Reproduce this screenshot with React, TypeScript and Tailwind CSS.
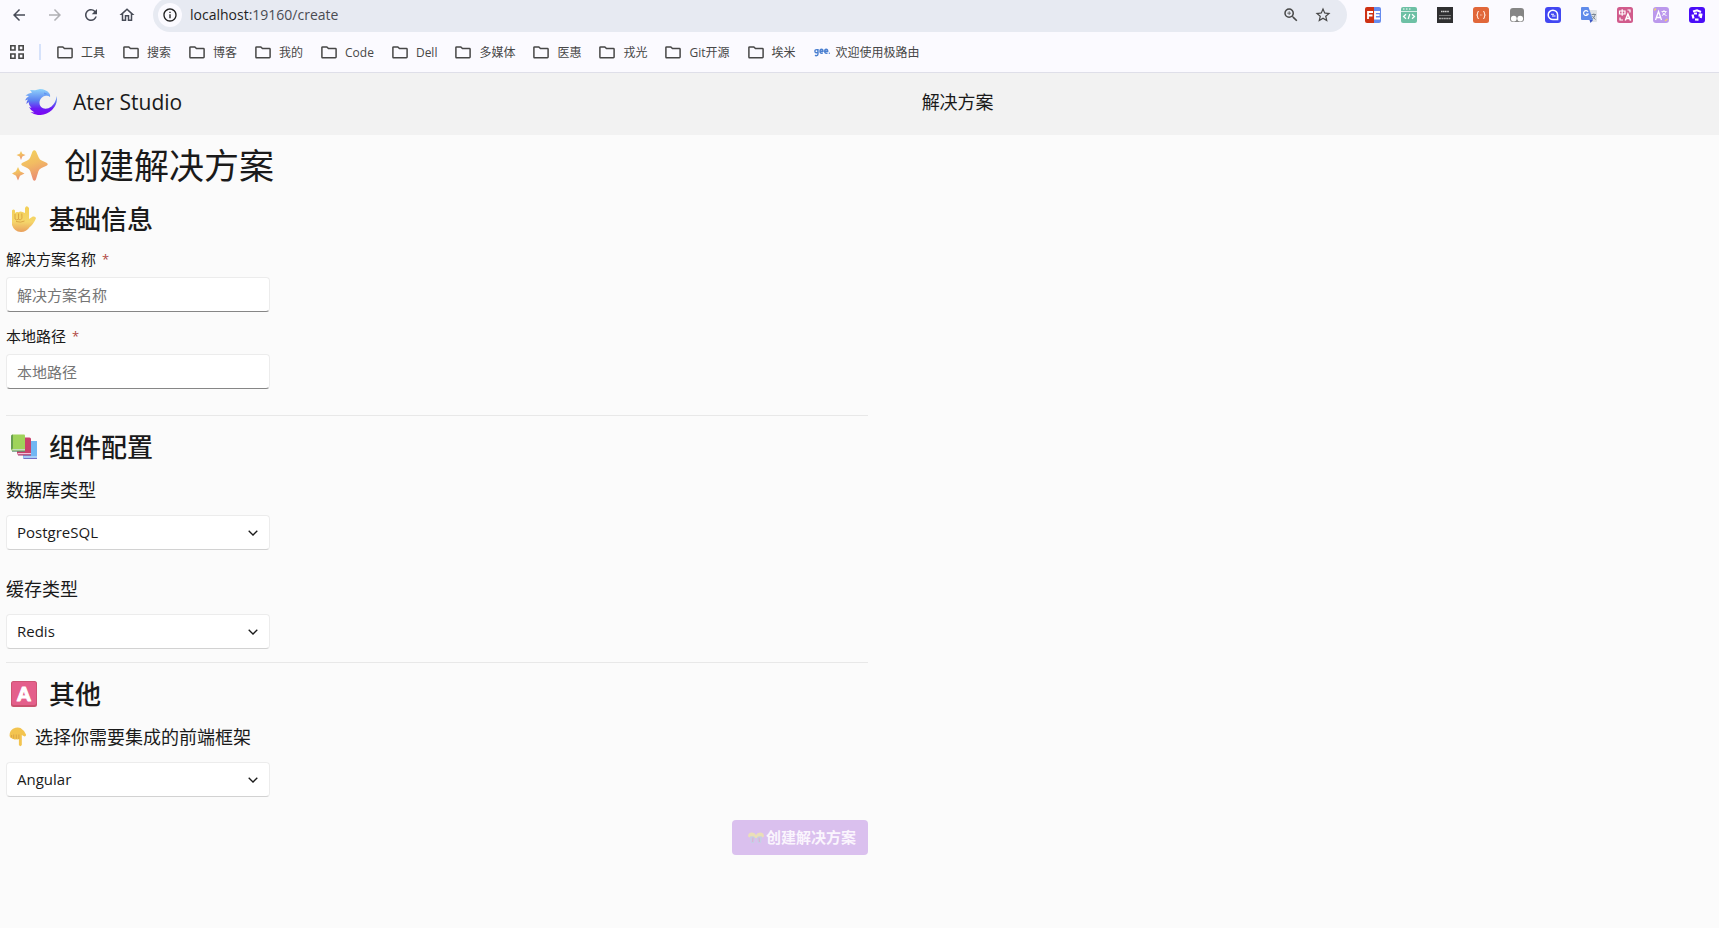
import type { ReactNode } from 'react';
import {
  MdArrowBack,
  MdArrowForward,
  MdInfoOutline,
  MdOutlineHome,
  MdRefresh,
  MdStarBorder,
  MdZoomIn,
} from 'react-icons/md';

const FOLDERS = ['工具', '搜索', '博客', '我的', 'Code', 'Dell', '多媒体', '医惠', '戎光', 'Git开源', '埃米'];

/* ---------- browser chrome ---------- */

function FolderIcon() {
  return (
    <svg viewBox="0 0 16 13" className="h-[13px] w-4" fill="none" stroke="#474747" strokeWidth="1.5">
      <path d="M.9 11.1V1.6q0-.7.7-.7h4.2l1.7 1.7h6.9q.7 0 .7.7v7.8q0 .7-.7.7H1.6q-.7 0-.7-.7z" />
    </svg>
  );
}

function AppsIcon() {
  return (
    <svg viewBox="0 0 14 14" className="size-3.5" fill="none" stroke="#474747" strokeWidth="1.6">
      <path d="M.8.8h4.2V5H.8zM9 .8h4.2V5H9zM.8 9h4.2v4.2H.8zM9 9h4.2v4.2H9z" />
    </svg>
  );
}

function Extension({ name, children }: { name: string; children: ReactNode }) {
  return (
    <button type="button" aria-label={name} className="size-4 shrink-0">
      <svg viewBox="0 0 16 16" className="size-4">
        {children}
      </svg>
    </button>
  );
}

function Extensions() {
  return (
    <div className="flex items-center gap-5">
      <Extension name="FE">
        <path d="M2 0h7v16H2q-2 0-2-2V2q0-2 2-2z" fill="#ce3114" />
        <path d="M9 0h5q2 0 2 2v12q0 2-2 2H9z" fill="#668bee" />
        <path d="M3 12V5h5M3 8.5h4.5M15 5h-5v6.500h5M10 8.200h4.500" fill="none" stroke="#fff" strokeWidth="1.8" />
      </Extension>
      <Extension name="Code viewer">
        <rect width="16" height="16" rx="2" fill="#6dc0a5" />
        <path d="M0 4.5h16" stroke="#d5eee6" />
        <path d="M2 2h1.5M5 2h1.5M8 2h1.5" stroke="#fff" strokeWidth="1.2" />
        <path d="M5 7.2 2.5 9.5 5 11.8M11 7.2l2.5 2.3-2.5 2.3M8.8 7l-1.6 5" fill="none" stroke="#fff" strokeWidth="1.2" />
      </Extension>
      <Extension name="Json">
        <rect width="16" height="16" fill="#2f2f31" />
        <path d="M4 4.5h8" stroke="#d0d0d0" strokeWidth="1.5" strokeDasharray="1.4 .4" />
        <path d="M2 8.5h12" stroke="#777" />
        <path d="M2 11.5h12" stroke="#aaa" strokeWidth="1.3" strokeDasharray="2 .4" />
      </Extension>
      <Extension name="Formatter">
        <rect width="16" height="16" rx="2.5" fill="#e1673a" />
        <path
          d="M6 4.5q-1.5 0-1.5 1.4v1Q4.5 8 3.3 8q1.2 0 1.2 1.1v1q0 1.4 1.5 1.4M10 4.5q1.5 0 1.5 1.4v1Q11.5 8 12.7 8q-1.2 0-1.2 1.1v1q0 1.4-1.5 1.4M7 8h.7M8.5 8h.7"
          fill="none"
          stroke="#ffe3d6"
          strokeWidth="1.1"
        />
      </Extension>
      <Extension name="Tampermonkey">
        <rect x="1" y="1" width="14" height="14" rx="3" fill="#858585" />
        <circle cx="4.8" cy="11.6" r="2.9" fill="#fff" />
        <circle cx="11.2" cy="11.6" r="2.9" fill="#fff" />
      </Extension>
      <Extension name="Search">
        <rect width="16" height="16" rx="3" fill="#4247f2" />
        <path d="M8 12.6a4.7 4.7 0 1 1 4.6-4.7v4.7z" fill="none" stroke="#fff" strokeWidth="1.5" />
        <path d="M6 7.2h3M7 9h3.5" stroke="#fff" strokeWidth="1.1" />
      </Extension>
      <Extension name="Translate">
        <path d="M8 3h7q1 0 1 1v10q0 1-1 1H9z" fill="#dfe2e6" />
        <path d="M1 0h6.5l4.500 13H1q-1 0-1-1V1q0-1 1-1z" fill="#5f8bea" />
        <path d="m8.500 13 3.500 0-2.500 3z" fill="#3c55c4" />
        <path d="M7 4.800A2.400 2.400 0 1 0 7.200 7H5" fill="none" stroke="#fff" strokeWidth="1.2" />
        <path d="M10.5 7.5H15M12.8 6.5v1M14.3 7.5q-.8 3-3 4.5M11.5 9q1 2 3 3.5" fill="none" stroke="#7b8794" />
      </Extension>
      <Extension name="Chinese to English">
        <rect width="16" height="16" rx="2.5" fill="#d15b8c" />
        <path d="M2.5 4H8v3H2.500zM5.200 2.200v6.600M10.500 3H13v2.500M3 10.500V13h3" fill="none" stroke="#fff" strokeWidth="1.2" />
        <path d="M8.300 13.600 10.900 7l2.700 6.600M9.300 11.500h3.300" fill="none" stroke="#fff" strokeWidth="1.5" />
      </Extension>
      <Extension name="Immersive translate">
        <rect width="16" height="16" rx="3" fill="#bb98ec" />
        <path d="M2.500 13 5.500 4.500 8.500 13M3.500 10.500h4" fill="none" stroke="#fff" strokeWidth="1.3" />
        <path d="M8.500 4.500h5M11 3v1.500M13 4.500q-1 3-4 4M9.500 5.500q1.500 2.500 4 3" fill="none" stroke="#fff" strokeWidth=".9" />
        <path d="M1.300 3.500 3 1.500M12 14l2.500-2" stroke="#f2d171" strokeWidth="1.4" />
      </Extension>
      <Extension name="Theme">
        <rect width="16" height="16" rx="3" fill="#4a0df8" />
        <path
          d="M4 4.500 8 3.300l4 1.700M12.500 6.500l-.8 4.500M9.500 12.700l-3.500-.2M4.500 11.500 3.500 7.500M5 6.500h3M10.800 6.500l-.3 3"
          fill="none"
          stroke="#fff"
          strokeWidth="2.2"
        />
      </Extension>
    </div>
  );
}

function BrowserBar() {
  return (
    <div className="border-b border-[#dfdfe9] bg-[#fbfaff] text-[#474747]">
      <div className="flex h-8 items-start overflow-hidden pr-3.5">
        <div className="flex h-[30px] items-center gap-[18px] pr-[17px] pl-2.5 text-[#474b57]">
          <button type="button" aria-label="Back">
            <MdArrowBack size={18} />
          </button>
          <button type="button" aria-label="Forward" disabled className="text-[#b0b0b4]">
            <MdArrowForward size={18} />
          </button>
          <button type="button" aria-label="Reload">
            <MdRefresh size={18} />
          </button>
          <button type="button" aria-label="Home">
            <MdOutlineHome size={18} />
          </button>
        </div>
        <div className="-mt-0.5 flex h-[34px] flex-1 items-center rounded-full bg-[#e7eaf2] pr-[15px] pl-[5px]">
          <button
            type="button"
            aria-label="Site information"
            className="flex size-6 shrink-0 items-center justify-center rounded-full bg-[#fbfaff] text-[#1f1f1f]"
          >
            <MdInfoOutline size={16} />
          </button>
          <div className="flex-1 pl-2 text-[14px] leading-5 text-[#4a4c52]">
            <span className="text-[#1f1f1f]">localhost</span>:19160/create
          </div>
          <div className="flex items-center gap-3.5 text-[#474747]">
            <button type="button" aria-label="Zoom">
              <MdZoomIn size={18} />
            </button>
            <button type="button" aria-label="Bookmark this page">
              <MdStarBorder size={18} />
            </button>
          </div>
        </div>
        <div className="flex h-[30px] items-center pl-[18px]">
          <Extensions />
        </div>
      </div>

      <nav aria-label="Bookmarks" className="flex h-10 items-center pl-2.5 text-[12px] leading-4">
        <button type="button" aria-label="Apps">
          <AppsIcon />
        </button>
        <span className="mr-4 ml-[15px] h-4 w-0.5 bg-[#d6e2fb]" />
        <div className="flex items-center gap-[18px]">
          {FOLDERS.map((name) => (
            <a key={name} href="#" className="flex items-center gap-2 whitespace-nowrap">
              <FolderIcon />
              <span className="pt-0.5">{name}</span>
            </a>
          ))}
          <a href="#" className="flex items-center gap-1.5 whitespace-nowrap">
            <svg viewBox="0 0 16 10" className="h-2.5 w-4" fill="none" stroke="#4a7fd0" strokeWidth="1.4">
              <path d="M4 2v5q0 1.700-1.800 1.700L.9 8.400M4 4.200a1.500 1.500 0 1 0-3.100 0 1.500 1.500 0 0 0 3.100 0zM6 4.300h3q0-2-1.500-2T6 4.300t1.700 2l1.200-.4M10.700 4.300h3q0-2-1.500-2t-1.500 2 1.700 2l1.200-.4M14.800 6.300h1" />
            </svg>
            <span className="pt-0.5">欢迎使用极路由</span>
          </a>
        </div>
      </nav>
    </div>
  );
}

/* ---------- page artwork ---------- */

function Logo() {
  return (
    <svg viewBox="0 0 32 26" className="h-[26px] w-8">
      <defs>
        <linearGradient id="logo" x1="0" y1="0" x2="0" y2="1">
          <stop offset="0" stopColor="#8fd3fb" />
          <stop offset=".45" stopColor="#5b7ff0" />
          <stop offset=".75" stopColor="#6a1cf5" />
          <stop offset="1" stopColor="#7d05f2" />
        </linearGradient>
      </defs>
      <path
        fill="url(#logo)"
        d="M5 1 10 1.200 15 0Q21 .3 24 4q1.500 1.500 1 4-1.500-1.600-4-1.300-5 .7-6.300 5.300-1 5 3.300 7.300 4 1.500 8.500-1.800Q31 13.500 31.700 7q1.300 8-4.700 14-6 5.500-14 5-4-.3-7.500-3l4 .5Q5.500 21.500 4 18l2.500 1Q3.500 16 3.600 13L1.500 15Q1.300 12.500 3 10.500L0 11.500Q1 8.500 4 7L.5 6.500Q3 4.500 7 3.600z"
      />
      <path d="m19 3.500 4 1.800-3.500.2z" fill="#5b8ef0" />
    </svg>
  );
}

function Sparkles() {
  return (
    <svg viewBox="0 0 36 32" className="h-8 w-9" aria-hidden="true">
      <defs>
        <linearGradient id="spark" x1="0" y1="0" x2=".3" y2="1">
          <stop offset="0" stopColor="#f3d35d" />
          <stop offset=".5" stopColor="#f2bd62" />
          <stop offset="1" stopColor="#eb8f72" />
        </linearGradient>
      </defs>
      <g fill="url(#spark)">
        <path d="M20.500 1.500q1.800-2.500 3.600 0l2.600 6q1 2.300 3 3l4.800 2.300q2.500 1.400 0 3l-5 2.200q-2.200 1-3 3l-2.600 8.500q-1.500 2.500-3 0l-2.700-8.500q-.8-2-3-3l-4.700-2.200q-2.500-1.500 0-3l4.700-2.300q2.200-1 3-3z" />
        <path d="m9 1 1.300 2.700L13.500 5l-3.200 1.500L9 10 7.700 6.500 4.500 5l3.200-1.300z" />
        <path d="m6 17 2 4.200 4.500 2.300-4.500 2.200-2 4.800-2-4.800-4-2.200 4-2.300z" />
      </g>
    </svg>
  );
}

function RockHand() {
  return (
    <svg viewBox="0 0 26 26" className="size-[26px]" aria-hidden="true">
      <defs>
        <linearGradient id="hand" x1="0" y1="0" x2="0" y2="1">
          <stop offset="0" stopColor="#f3cf56" />
          <stop offset=".6" stopColor="#f5d66a" />
          <stop offset="1" stopColor="#e9a05d" />
        </linearGradient>
      </defs>
      <path
        fill="url(#hand)"
        d="M1 4.500Q2.500 2.500 4 4.500V7q1.500-1.700 3.500-.8Q9.500 5 11.500 6l2.500 1V2q1.500-3.300 4 0v11l3.800-2.500q2.800-.6 3.200 1.800-2.500 6-6.500 9-3 4.700-8.500 4.700Q3 25.500 1 19z"
      />
      <path d="M4 8v5q1.700 1.800 3.500 0V7.500M7.500 13.500q2 1 3.500-1l-.2-5M5 15.500q5 1.500 8.500-.5" fill="none" stroke="#d39a3c" strokeWidth=".8" />
    </svg>
  );
}

function Books() {
  return (
    <svg viewBox="0 0 26 26" className="size-[26px]" aria-hidden="true">
      <path d="M12 7h14v18H14q-2 0-2-2z" fill="#70b7f3" />
      <path d="M12.500 22.500H26v1H13z" fill="#d8e4fb" />
      <path d="M12.500 24.500H26" stroke="#726fc7" />
      <path d="M6 3.500h12.500q1.500 0 1.500 1.500v16H8q-2 0-2-2z" fill="#c9416b" />
      <path d="M6.500 19H20v1.500H7z" fill="#f2c2db" />
      <path d="M7 21h13" stroke="#9f356b" />
      <path d="M2 .5h11q1 0 1 1V17H2q-2 0-2-2V2.500q0-2 2-2z" fill="#9fd35b" />
      <path d="M2 .5v14l-2 1V2.500q0-2 2-2z" fill="#689e51" />
      <path d="M1.500 15H14v1.500H1.500z" fill="#c5dcc4" />
      <path d="M1 17.200h13" stroke="#5c8d74" />
    </svg>
  );
}

function LetterA() {
  return (
    <svg viewBox="0 0 26 26" className="size-[26px]" aria-hidden="true">
      <rect width="26" height="26" rx="2.5" fill="#c9526e" />
      <rect x=".8" y=".8" width="24.400" height="23.200" rx="2" fill="#e45f8b" />
      <text
        x="13"
        y="20"
        textAnchor="middle"
        fontFamily="Lato, sans-serif"
        fontSize="19"
        fontWeight="900"
        fill="#fff"
        stroke="#fff"
        strokeLinejoin="round"
      >
        A
      </text>
    </svg>
  );
}

function PointDown() {
  return (
    <svg viewBox="0 0 18 20" className="h-5 w-[18px]" aria-hidden="true">
      <path
        d="M4 1.800Q8-.2 11.500 1q4 2.500 5.500 6.500.3 2-1.500 2l-2.700-1.500V18q-1.400 2.300-2.900 0v-6q-1.200 1-2.700.2-1.500.8-2.700-.2-1.500.2-2-1Q.8 11 .6 9 .3 4 4 1.800z"
        fill="#f3c44f"
      />
      <path d="M2.600 10.500V8M4.700 11.500V7.500M7.300 11.800V7.500M9.900 12V7.500" fill="none" stroke="#d39640" strokeWidth=".7" />
    </svg>
  );
}

function PartyIcon() {
  return (
    <svg viewBox="0 0 16 12" className="h-3 w-4" aria-hidden="true">
      <path d="M0 4.500Q0 .5 4 .5q3 0 4 2.500Q9 .5 12 .5q4 0 4 4L13 6H3z" fill="#eadfb8" />
      <path d="M2 4.500q4-1 5 1L6 11H3z" fill="#c6cfe6" />
      <path d="M14 4.500q-4-1-5 1L10 11h3z" fill="#c6cfe6" />
      <path d="M5 5.500 4.500 10M11 5.500l.5 4.500" stroke="#dfb0d2" strokeWidth="1.2" />
    </svg>
  );
}

/* ---------- form pieces ---------- */

function SectionTitle({ icon, children }: { icon: ReactNode; children: ReactNode }) {
  return (
    <h2 className="flex h-11 items-center gap-3 pl-[5px] text-[26px] leading-9 font-medium">
      {icon}
      {children}
    </h2>
  );
}

function TextField({ id, label }: { id: string; label: string }) {
  return (
    <div>
      <label htmlFor={id} className="flex gap-1.5 text-[15px] leading-5">
        {label}
        <span className="text-[13px] text-[#b0483f]">*</span>
      </label>
      <input
        id={id}
        type="text"
        required
        placeholder={label}
        className="mt-2 block h-[35px] w-[264px] rounded border border-[#ececec] border-b-[#868686] bg-white px-2.5 text-[15px] placeholder:text-[#757575] focus:outline-none"
      />
    </div>
  );
}

function SelectField({ id, label, icon, options }: { id: string; label: string; icon?: ReactNode; options: string[] }) {
  return (
    <div>
      <label htmlFor={id} className="flex items-center gap-2 text-[18px] leading-6">
        {icon}
        {label}
      </label>
      <div className="relative mt-[13px] w-[264px]">
        <select
          id={id}
          className="block h-[35px] w-full appearance-none rounded border border-[#ececec] border-b-[#d2d2d2] bg-white px-2.5 text-[15px] focus:outline-none"
        >
          {options.map((o) => (
            <option key={o}>{o}</option>
          ))}
        </select>
        <svg
          viewBox="0 0 10 6"
          className="pointer-events-none absolute top-[15px] right-3 h-1.5 w-2.5"
          fill="none"
          stroke="#1a1a1a"
          strokeWidth="1.3"
        >
          <path d="m.7.7 4.300 4.300L9.300.7" />
        </svg>
      </div>
    </div>
  );
}

export default function App() {
  return (
    <div className="min-h-screen bg-[#fbfbfb] font-['Open_Sans','Noto_Sans_CJK_SC',sans-serif] text-[#1a1a1a]">
      <BrowserBar />

      <header className="flex h-[62px] items-center bg-[#f2f2f2] pb-1 pl-[25px]">
        <a href="#" className="flex items-center gap-4 pr-3.5 text-[21px] leading-7">
          <Logo />
          Ater Studio
        </a>
        <nav className="flex flex-1 justify-center">
          <a href="#" className="text-[18px] leading-6">
            解决方案
          </a>
        </nav>
      </header>

      <main className="px-1.5">
        <form className="w-full max-w-[862px]" onSubmit={(e) => e.preventDefault()}>
          <h1 className="flex h-[62px] items-center gap-4 pl-1.5 text-[35px] leading-[48px]">
            <Sparkles />
            创建解决方案
          </h1>

          <SectionTitle icon={<RockHand />}>基础信息</SectionTitle>
          <div className="flex flex-col gap-3.5 pt-2 pb-[26px]">
            <TextField id="name" label="解决方案名称" />
            <TextField id="path" label="本地路径" />
          </div>

          <hr className="mb-[9px] border-[#e8e8e8]" />

          <SectionTitle icon={<Books />}>组件配置</SectionTitle>
          <div className="flex flex-col gap-[27px] pt-[9px] pb-[13px]">
            <SelectField id="database" label="数据库类型" options={['PostgreSQL', 'SQLServer']} />
            <SelectField id="cache" label="缓存类型" options={['Redis', 'Memory']} />
          </div>

          <hr className="mb-[9px] border-[#e8e8e8]" />

          <SectionTitle icon={<LetterA />}>其他</SectionTitle>
          <div className="pt-[9px] pb-[23px] [&_label]:pl-[3px]">
            <SelectField
              id="frontend"
              label="选择你需要集成的前端框架"
              icon={<PointDown />}
              options={['Angular', 'Blazor', 'None']}
            />
          </div>

          <div className="flex justify-end">
            <button
              type="submit"
              disabled
              className="flex h-[35px] items-center gap-0.5 rounded bg-[#dac0ee] pr-3 pl-4 text-[15px] font-semibold text-[#faf5fd]"
            >
              <PartyIcon />
              创建解决方案
            </button>
          </div>
        </form>
      </main>
    </div>
  );
}
